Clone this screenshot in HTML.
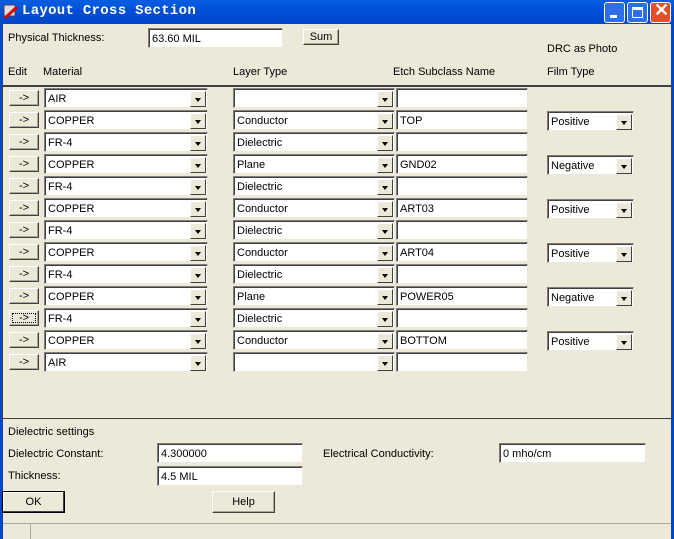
<!DOCTYPE html>
<html><head><meta charset="utf-8"><style>
*{box-sizing:border-box}
body{margin:0;width:674px;height:539px;overflow:hidden;background:#ece9d8;font-family:"Liberation Sans",sans-serif;font-size:11px;color:#000;position:relative}
.a{position:absolute}
.title{left:0;top:0;width:674px;height:24px;background:linear-gradient(#0a5fe0,#0050d8 40%,#0046c8);}
.title span{position:absolute;left:22px;top:3px;color:#fff;font-family:"Liberation Mono",monospace;font-weight:bold;font-size:14px;letter-spacing:0.3px}
.lb{left:0;top:24px;width:3px;height:515px;background:#0046c8}
.rb{right:0;top:24px;width:3px;height:515px;background:#0046c8}
.tb{top:2px;width:21px;height:21px;border:1px solid #fff;border-radius:3px;background:#2f6ee8}
.inp{background:#fff;border-top:1px solid #7f7f7f;border-left:1px solid #7f7f7f;border-right:1px solid #ece9d8;border-bottom:1px solid #ece9d8;box-shadow:inset 1px 1px 0 #404040;padding:4px 0 0 3px;height:20px;white-space:nowrap}
.btn{background:#ece9d8;border:1px solid;border-color:#fff #404040 #404040 #fff;box-shadow:inset -1px -1px 0 #aca899;text-align:center}
.dd{position:absolute;right:1px;top:2px;width:16px;height:16px;background:#ece9d8;border:1px solid;border-color:#fff #404040 #404040 #fff}
.dd:after{content:"";position:absolute;left:4px;top:6px;border-left:3.5px solid transparent;border-right:3.5px solid transparent;border-top:4px solid #000}
</style></head><body>
<div class="a title"><svg class="a" style="left:3px;top:4px" width="16" height="16"><rect x="1" y="1" width="11" height="11" fill="#ddd" stroke="#446"/><path d="M2 14 L14 3" stroke="#d00" stroke-width="3"/></svg><span>Layout Cross Section</span>
<div class="a tb" style="left:604px"><div class="a" style="left:5px;top:12px;width:7px;height:3px;background:#fff"></div></div>
<div class="a tb" style="left:627px"><div class="a" style="left:4px;top:4px;width:11px;height:11px;border:1px solid #fff;border-top-width:3px"></div></div>
<div class="a tb" style="left:650px;background:#e0502a"><div class="a" style="left:3px;top:-3px;color:#fff;font-size:18px;font-weight:bold">✕</div></div>
</div>
<div class="a lb"></div><div class="a rb"></div>
<div class="a" style="left:8px;top:32px">Physical Thickness:</div>
<div class="a inp" style="left:148px;top:28px;width:135px">63.60 MIL</div>
<div class="a btn" style="left:303px;top:29px;width:36px;height:16px;line-height:15px">Sum</div>
<div class="a" style="left:547px;top:43px">DRC as Photo</div>
<div class="a" style="left:8px;top:66px">Edit</div>
<div class="a" style="left:43px;top:66px">Material</div>
<div class="a" style="left:233px;top:66px">Layer Type</div>
<div class="a" style="left:393px;top:66px">Etch Subclass Name</div>
<div class="a" style="left:547px;top:66px">Film Type</div>
<div class="a" style="left:2px;top:85px;width:670px;height:334px;border-top:2px solid #404040;border-left:1px solid #404040;border-bottom:1px solid #404040;border-right:1px solid #404040"></div>
<div id="rows"></div>
<div class="a" style="left:8px;top:426px">Dielectric settings</div>
<div class="a" style="left:8px;top:448px">Dielectric Constant:</div>
<div class="a inp" style="left:157px;top:443px;width:146px">4.300000</div>
<div class="a" style="left:323px;top:448px">Electrical Conductivity:</div>
<div class="a inp" style="left:499px;top:443px;width:147px">0 mho/cm</div>
<div class="a" style="left:8px;top:470px">Thickness:</div>
<div class="a inp" style="left:157px;top:466px;width:146px">4.5 MIL</div>
<div class="a btn" style="left:2px;top:491px;width:63px;height:22px;line-height:21px;border-color:#000;box-shadow:inset -1px -1px 0 #404040,inset 1px 1px 0 #fff">OK</div>
<div class="a btn" style="left:212px;top:491px;width:63px;height:22px;line-height:21px">Help</div>
<div class="a" style="left:3px;top:523px;width:668px;height:1px;background:#aca899"></div>
<div class="a" style="left:30px;top:524px;width:1px;height:15px;background:#aca899"></div>
<script>
var m=["AIR","COPPER","FR-4","COPPER","FR-4","COPPER","FR-4","COPPER","FR-4","COPPER","FR-4","COPPER","AIR"];
var l=["","Conductor","Dielectric","Plane","Dielectric","Conductor","Dielectric","Conductor","Dielectric","Plane","Dielectric","Conductor",""];
var e=["","TOP","","GND02","","ART03","","ART04","","POWER05","","BOTTOM",""];
var f=["","Positive","","Negative","","Positive","","Positive","","Negative","","Positive",""];
var h="";
for(var i=0;i<13;i++){var y=88+22*i;
h+='<div class="a btn" style="left:9px;top:'+(y+2)+'px;width:30px;height:16px;line-height:15px;'+(i==10?'outline:1px dotted #000;outline-offset:-4px':'')+'">-&gt;</div>';
h+='<div class="a inp" style="left:44px;top:'+y+'px;width:164px">'+m[i]+'<div class="dd"></div></div>';
h+='<div class="a inp" style="left:233px;top:'+y+'px;width:162px">'+l[i]+'<div class="dd"></div></div>';
h+='<div class="a inp" style="left:396px;top:'+y+'px;width:132px">'+e[i]+'</div>';
if(f[i])h+='<div class="a inp" style="left:547px;top:'+(y+1)+'px;width:87px">'+f[i]+'<div class="dd"></div></div>';}
document.getElementById("rows").innerHTML=h;
</script>
</body></html>
